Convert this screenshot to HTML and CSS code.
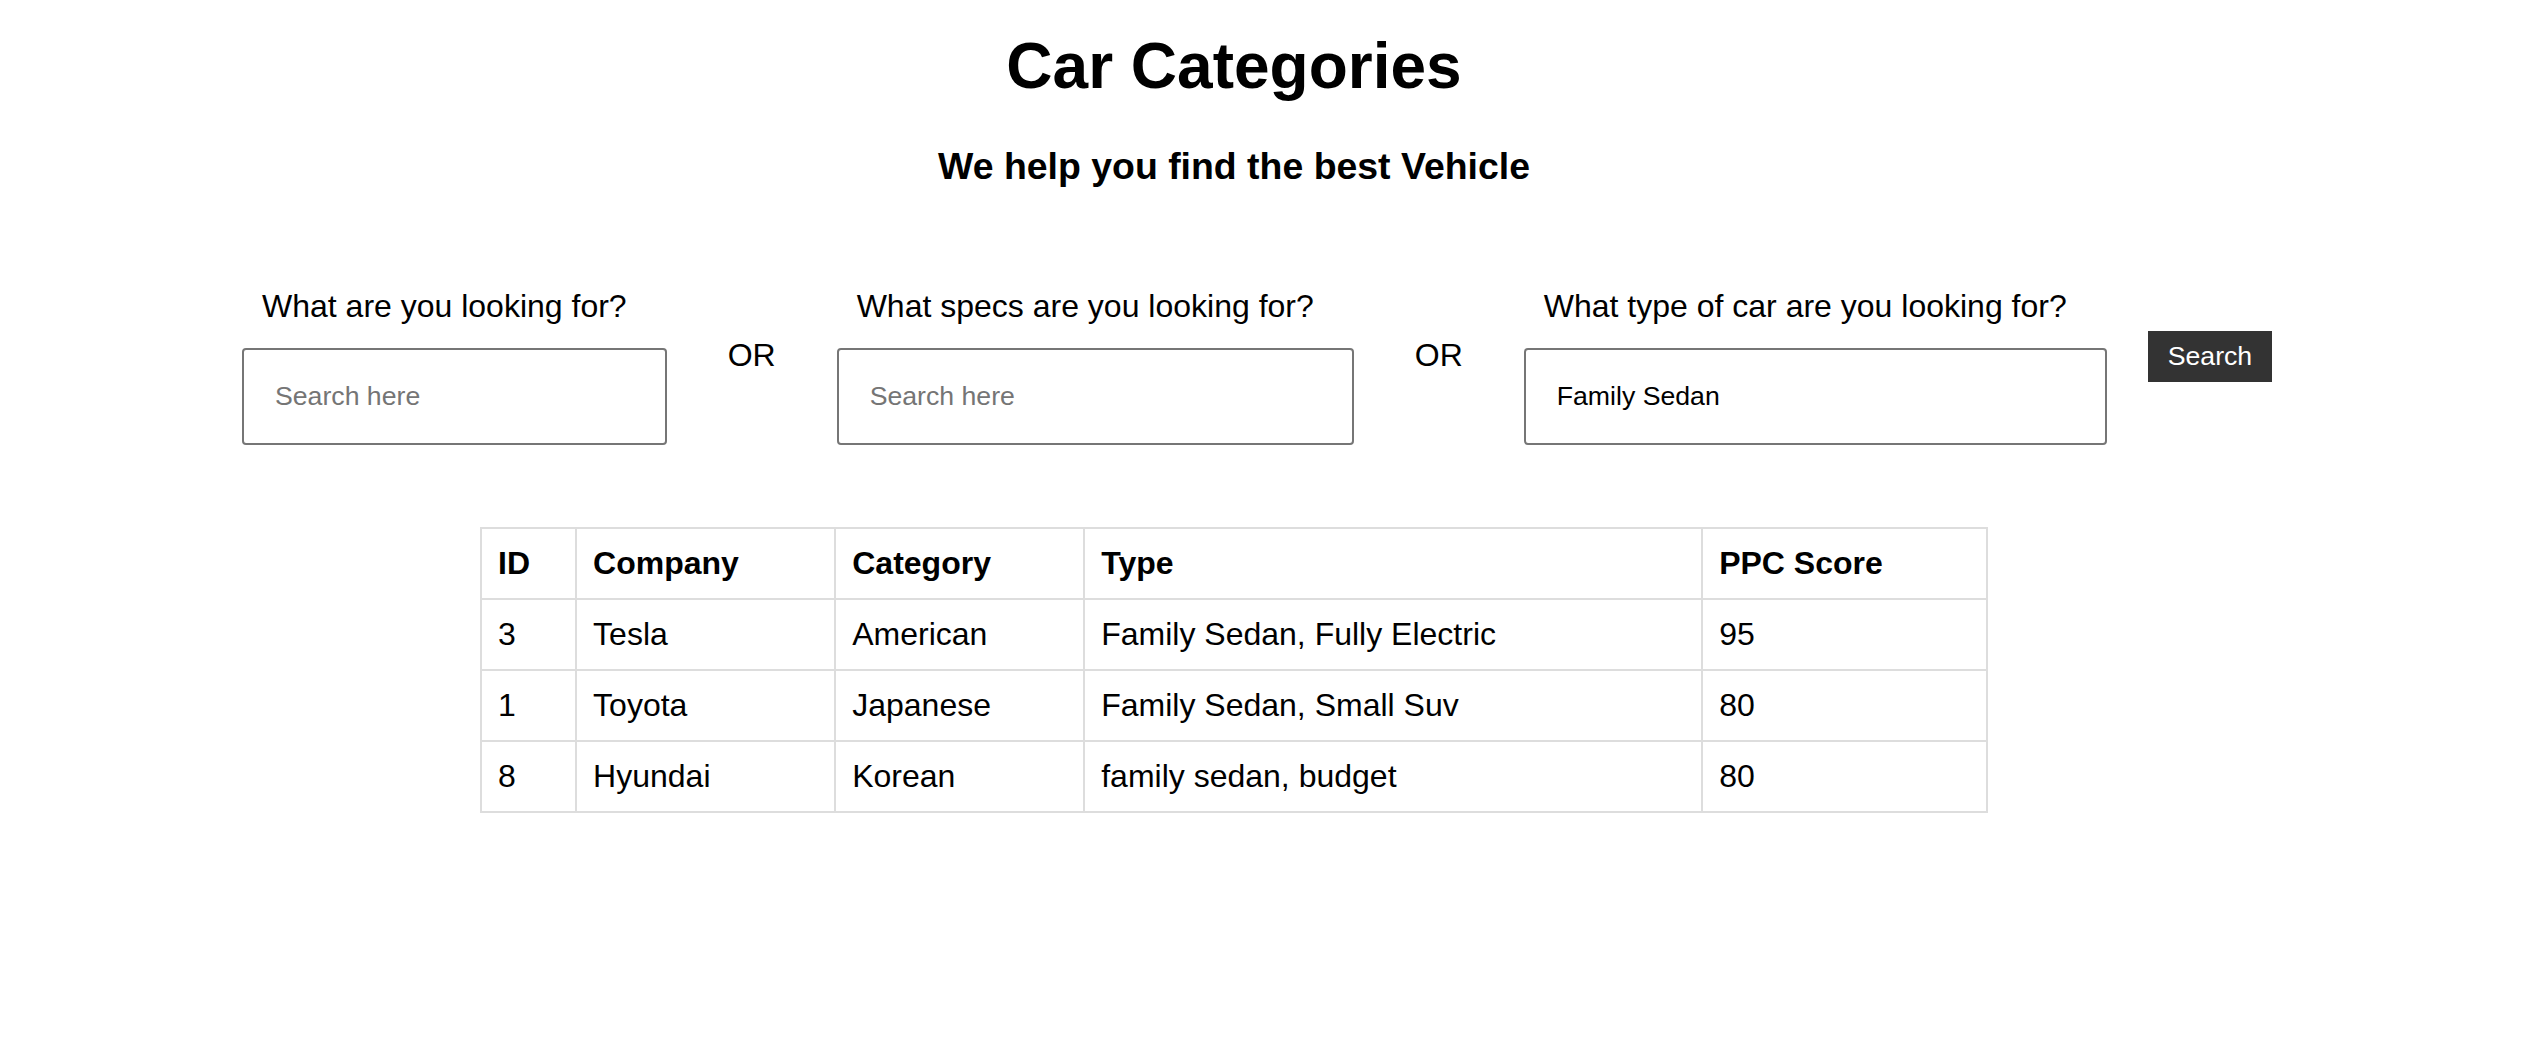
FILE: index.html
```html
<!DOCTYPE html>
<html lang="en">
<head>
    <meta charset="UTF-8">
    <meta name="viewport" content="width=device-width, initial-scale=1.0">
    <title>Car Categories</title>
    <link rel="stylesheet" href="styles.css">
</head>
<body>
    <div class="page">
        <h1>Car Categories</h1>
        <h3>We help you find the best Vehicle</h3>

        <form class="search-row" id="searchForm">
            <div class="field">
                <label for="keyword">What are you looking for?</label>
                <input type="text" id="keyword" placeholder="Search here">
            </div>
            <span class="or">OR</span>
            <div class="field">
                <label for="specs">What specs are you looking for?</label>
                <input type="text" id="specs" placeholder="Search here">
            </div>
            <span class="or">OR</span>
            <div class="field">
                <label for="carType">What type of car are you looking for?</label>
                <input type="text" id="carType" placeholder="Search here" value="Family Sedan">
            </div>
            <button type="submit" class="search-btn">Search</button>
        </form>

        <table class="results">
            <thead>
                <tr><th>ID</th><th>Company</th><th>Category</th><th>Type</th><th>PPC Score</th></tr>
            </thead>
            <tbody>
                <tr><td>3</td><td>Tesla</td><td>American</td><td>Family Sedan, Fully Electric</td><td>95</td></tr>
                <tr><td>1</td><td>Toyota</td><td>Japanese</td><td>Family Sedan, Small Suv</td><td>80</td></tr>
                <tr><td>8</td><td>Hyundai</td><td>Korean</td><td>family sedan, budget</td><td>80</td></tr>
            </tbody>
        </table>
    </div>
</body>
</html>
```

FILE: styles.css
```css
body { font-family: "Liberation Sans", Arial, sans-serif; margin: 0; color: #000; background: #fff; font-size: 32px; }
.page { width: 2468px; }
h1 { font-size: 64px; text-align: center; margin: 29px 0 42px; }
h3 { font-size: 37.44px; text-align: center; margin: 0 0 100px; }
.search-row { display: flex; align-items: flex-start; padding-left: 242px; margin-bottom: 82px; }
.field { display: flex; flex-direction: column; }
.field label { padding: 0 40px 0 20px; margin-bottom: 23px; white-space: nowrap; }
.field input { width: 100%; box-sizing: border-box; padding: 31px; border: 2px solid #767676; border-radius: 4px; font-family: inherit; font-size: 26.67px; color: #000; }
.field input::placeholder { color: #757575; }
.or { margin: 49px 61px 0; }
.search-btn { margin: 43px 0 0 41px; padding: 10px 20px; background-color: #333; color: #fff; border: none; font-family: inherit; font-size: 26.67px; cursor: pointer; }
.results { width: 1508px; margin: 0 auto; border-collapse: collapse; }
.results th, .results td { border: 2px solid #ddd; padding: 16px; text-align: left; }
```
